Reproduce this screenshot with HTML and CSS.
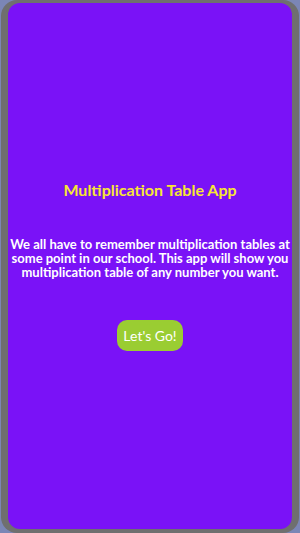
FILE: index.html
```html
<!DOCTYPE html>
<html lang="en">
<head>
  <meta charset="UTF-8" />
  <meta name="viewport" content="width=device-width, initial-scale=1.0"/>
  <title>Multiplication Table App</title>
  <link rel="stylesheet" href="styles.css">
</head>
<body>
  <div class="phone">
    <main class="screen">
      <h1 class="title">Multiplication Table App</h1>
      <p class="intro">We all have to remember multiplication tables at some point in our school. This app will show you multiplication table of any number you want.</p>
      <button class="go">Let's Go!</button>
    </main>
  </div>
</body>
</html>
```
FILE: styles.css
```css
body {
  margin: 0;
  background: #7b86b6;
  font-family: Lato, sans-serif;
}

.phone {
  height: 533px;
  margin: 0 1px;
  box-sizing: border-box;
  padding: 3px 7px 4px 7px;
  background: #6f6f6f;
  border-radius: 16px;
  display: flex;
}

.screen {
  flex: 1;
  background: #7a12f7;
  border-radius: 12px;
  display: flex;
  flex-direction: column;
  align-items: center;
  padding-top: 176px;
  text-align: center;
}

.title {
  margin: 0;
  color: #f7e733;
  font-size: 16px;
  font-weight: bold;
  line-height: 22px;
}

.intro {
  margin: 36px 0 0;
  padding: 0 2px;
  color: white;
  font-size: 13px;
  font-weight: bold;
  line-height: 14px;
}

.go {
  margin-top: 41px;
  padding: 0 6px;
  height: 31px;
  white-space: nowrap;
  border: none;
  border-radius: 10px;
  background: #9acd32;
  color: white;
  font-family: inherit;
  font-size: 14px;
}
```
